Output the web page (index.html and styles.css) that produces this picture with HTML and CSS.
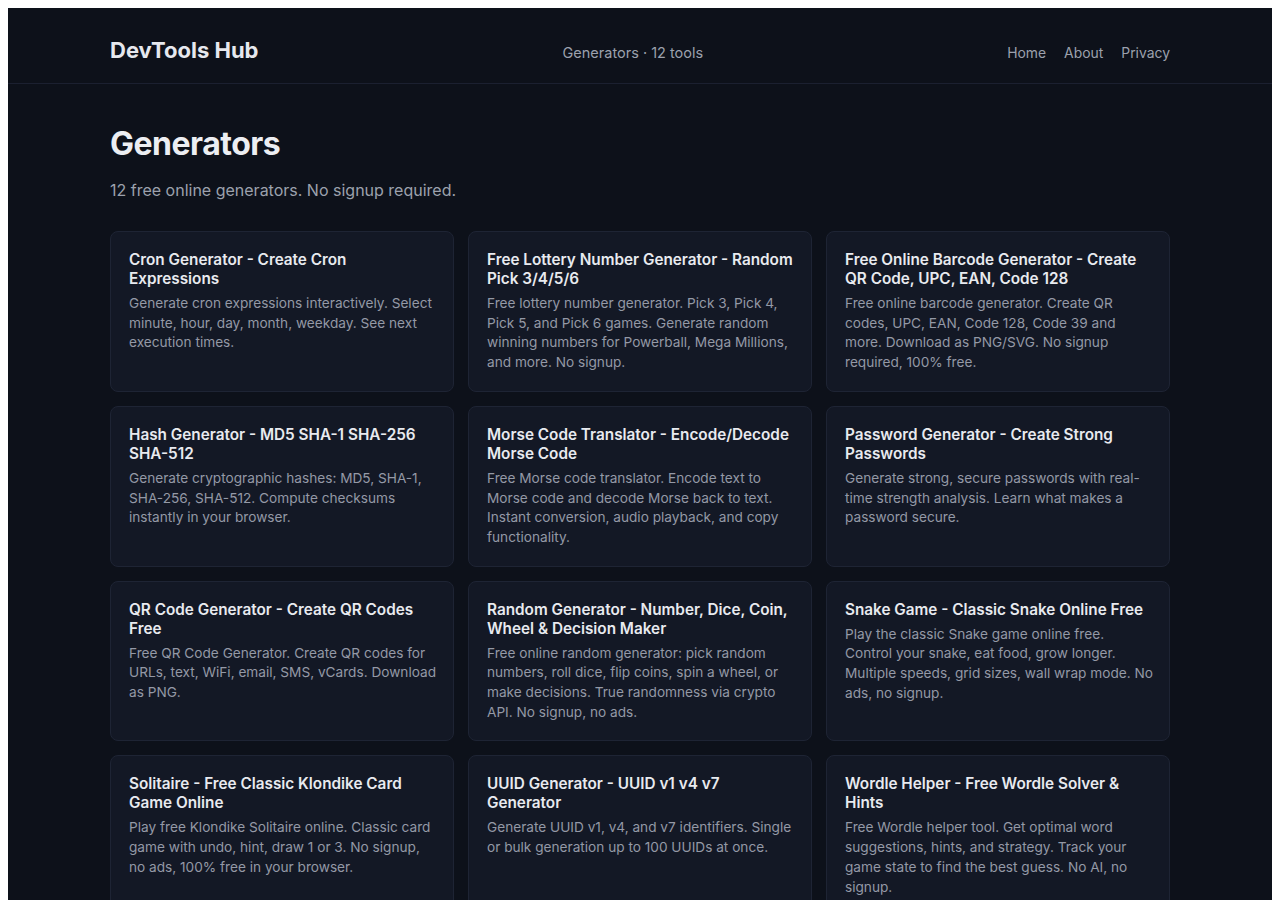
FILE: index.html
```html
<!DOCTYPE html>
<html lang="en">
<head>
<meta charset="utf-8">
<title>Generators - DevTools Hub</title>
<link rel="stylesheet" href="styles.css">
</head>
<body>
<div class="page">
  <header class="site-header">
    <div class="container header-inner">
      <a class="logo" href="#">DevTools Hub</a>
      <span class="crumb">Generators · 12 tools</span>
      <nav class="nav">
        <a href="#">Home</a>
        <a href="#">About</a>
        <a href="#">Privacy</a>
      </nav>
    </div>
  </header>
  <main class="container main">
    <h1 class="title">Generators</h1>
    <p class="subtitle">12 free online generators. No signup required.</p>
    <div class="grid">
      <a class="card" href="#"><h2>Cron Generator - Create Cron Expressions</h2><p>Generate cron expressions interactively. Select minute, hour, day, month, weekday. See next execution times.</p></a>
      <a class="card" href="#"><h2>Free Lottery Number Generator - Random Pick 3/4/5/6</h2><p>Free lottery number generator. Pick 3, Pick 4, Pick 5, and Pick 6 games. Generate random winning numbers for Powerball, Mega Millions, and more. No signup.</p></a>
      <a class="card" href="#"><h2>Free Online Barcode Generator - Create QR Code, UPC, EAN, Code 128</h2><p>Free online barcode generator. Create QR codes, UPC, EAN, Code 128, Code 39 and more. Download as PNG/SVG. No signup required, 100% free.</p></a>
      <a class="card" href="#"><h2>Hash Generator - MD5 SHA-1 SHA-256 SHA-512</h2><p>Generate cryptographic hashes: MD5, SHA-1, SHA-256, SHA-512. Compute checksums instantly in your browser.</p></a>
      <a class="card" href="#"><h2>Morse Code Translator - Encode/Decode Morse Code</h2><p>Free Morse code translator. Encode text to Morse code and decode Morse back to text. Instant conversion, audio playback, and copy functionality.</p></a>
      <a class="card" href="#"><h2>Password Generator - Create Strong Passwords</h2><p>Generate strong, secure passwords with real-time strength analysis. Learn what makes a password secure.</p></a>
      <a class="card" href="#"><h2>QR Code Generator - Create QR Codes Free</h2><p>Free QR Code Generator. Create QR codes for URLs, text, WiFi, email, SMS, vCards. Download as PNG.</p></a>
      <a class="card" href="#"><h2>Random Generator - Number, Dice, Coin, Wheel &amp; Decision Maker</h2><p>Free online random generator: pick random numbers, roll dice, flip coins, spin a wheel, or make decisions. True randomness via crypto API. No signup, no ads.</p></a>
      <a class="card" href="#"><h2>Snake Game - Classic Snake Online Free</h2><p>Play the classic Snake game online free. Control your snake, eat food, grow longer. Multiple speeds, grid sizes, wall wrap mode. No ads, no signup.</p></a>
      <a class="card" href="#"><h2>Solitaire - Free Classic Klondike Card Game Online</h2><p>Play free Klondike Solitaire online. Classic card game with undo, hint, draw 1 or 3. No signup, no ads, 100% free in your browser.</p></a>
      <a class="card" href="#"><h2>UUID Generator - UUID v1 v4 v7 Generator</h2><p>Generate UUID v1, v4, and v7 identifiers. Single or bulk generation up to 100 UUIDs at once.</p></a>
      <a class="card" href="#"><h2>Wordle Helper - Free Wordle Solver &amp; Hints</h2><p>Free Wordle helper tool. Get optimal word suggestions, hints, and strategy. Track your game state to find the best guess. No AI, no signup.</p></a>
    </div>
  </main>
</div>
</body>
</html>
```
FILE: styles.css
```css
body {
  margin: 8px;
  background: #ffffff;
  font-family: Inter, "Noto Sans", "Liberation Sans", sans-serif;
}
.page {
  background: #0d111a;
  min-height: 900px;
  color: #e6e8ee;
}
.container {
  max-width: 1060px;
  margin: 0 auto;
}
.site-header {
  border-bottom: 1px solid #1b2030;
}
.header-inner {
  display: flex;
  align-items: baseline;
  justify-content: space-between;
  height: 75px;
  box-sizing: border-box;
  padding-top: 28px;
}
.logo {
  color: #e6e8ee;
  text-decoration: none;
  font-size: 22px;
  font-weight: 700;
  line-height: 28px;
}
.crumb {
  font-size: 14.5px;
  color: #9ca1ad;
}
.nav {
  display: flex;
  gap: 18px;
}
.nav a {
  color: #9ca1ad;
  text-decoration: none;
  font-size: 13.9px;
}
.main {
  padding-top: 40px;
}
.title {
  margin: 0;
  font-size: 32px;
  line-height: 40px;
  font-weight: 700;
  letter-spacing: -0.5px;
  color: #eceef2;
}
.subtitle {
  margin: 14px 0 29px;
  font-size: 16px;
  line-height: 24px;
  color: #9ca1ad;
}
.grid {
  display: grid;
  grid-template-columns: repeat(3, 1fr);
  gap: 14px;
}
.card {
  display: block;
  background: #131825;
  border: 1px solid #1e2434;
  border-radius: 8px;
  padding: 18px 16px 18px 18px;
  text-decoration: none;
}
.card h2 {
  margin: 0 0 6px;
  font-size: 15.3px;
  line-height: 19px;
  font-weight: 600;
  color: #e8eaef;
}
.card p {
  margin: 0;
  font-size: 13.65px;
  line-height: 19.7px;
  color: #9499a6;
}
```
